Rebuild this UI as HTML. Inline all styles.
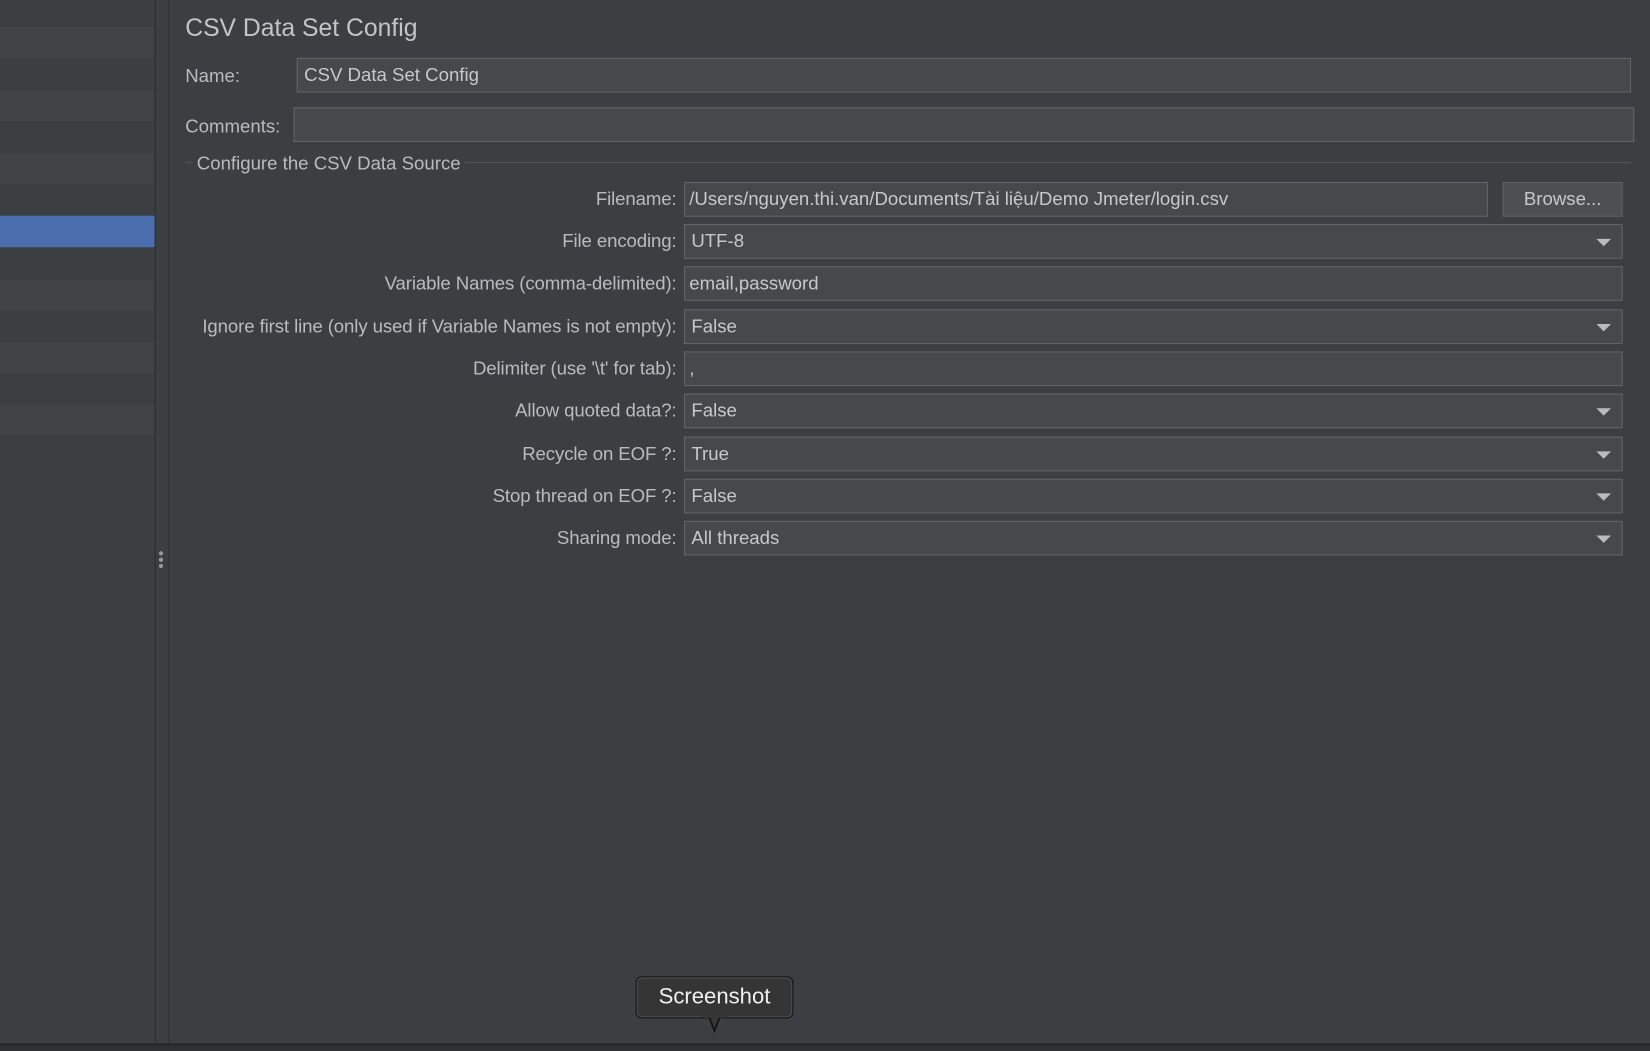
<!DOCTYPE html>
<html><head><meta charset="utf-8"><style>
html,body{margin:0;padding:0;background:#3c3f41;overflow:hidden;width:1650px;height:1050px}
#w{position:absolute;left:0;top:0;width:1568px;height:998px;transform:scale(1.05230,1.05210);transform-origin:0 0;font-family:"Liberation Sans",sans-serif;color:#bbbbbb;font-size:17.7px}
.a{position:absolute}
.f{position:absolute;background:#45494a;border:1px solid #646464;box-sizing:border-box;height:33px;line-height:31px;padding-left:6px;color:#c8c8c8;font-size:17.7px}
.l{position:absolute;right:925px;text-align:right;white-space:nowrap;line-height:33px;letter-spacing:-0.1px}
.dd::after{content:"";position:absolute;right:10px;top:13px;border-left:7px solid transparent;border-right:7px solid transparent;border-top:7px solid #bbb}
</style></head><body><div id="w">
<div class="a" style="left:0;top:0;width:147px;height:998px;background:#3c3f41"></div>
<div class="a" style="left:0;top:26px;width:147px;height:29px;background:#414446"></div>
<div class="a" style="left:0;top:86px;width:147px;height:29px;background:#414446"></div>
<div class="a" style="left:0;top:146px;width:147px;height:29px;background:#414446"></div>
<div class="a" style="left:0;top:205px;width:147px;height:30px;background:#4b6eaf"></div>
<div class="a" style="left:0;top:266px;width:147px;height:29px;background:#414446"></div>
<div class="a" style="left:0;top:325px;width:147px;height:29px;background:#414446"></div>
<div class="a" style="left:0;top:385px;width:147px;height:29px;background:#414446"></div>
<div class="a" style="left:147px;top:0;width:1px;height:998px;background:#2b2b2b"></div>
<div class="a" style="left:160px;top:0;width:1px;height:998px;background:#2e3032"></div>
<div class="a" style="left:151px;top:524px;width:4px;height:4px;border-radius:2px;background:#999;box-shadow:0 6px 0 #999,0 12px 0 #999"></div>
<div class="a" style="left:176px;top:13px;font-size:23.5px;color:#c4c4c4">CSV Data Set Config</div>
<div class="a" style="left:176px;top:60px;line-height:24px">Name:</div>
<div class="f" style="left:282px;top:55px;width:1268px">CSV Data Set Config</div>
<div class="a" style="left:176px;top:108px;line-height:24px">Comments:</div>
<div class="f" style="left:279px;top:102px;width:1274px"></div>
<div class="a" style="left:176px;top:154px;width:1374px;height:1px;background:#555"></div>
<div class="a" style="left:183px;top:144px;padding:0 4px;background:#3c3f41;line-height:22px">Configure the CSV Data Source</div>
<div class="l" style="top:173px">Filename:</div>
<div class="f" style="left:650px;top:173px;width:764px;padding-left:4px">/Users/nguyen.thi.van/Documents/Tài liệu/Demo Jmeter/login.csv</div>
<div class="f" style="left:1428px;top:173px;width:114px;text-align:center;padding:0;background:#4c5052;border-color:#5e6060">Browse...</div>
<div class="l" style="top:213px">File encoding:</div>
<div class="f dd" style="left:650px;top:213px;width:892px">UTF-8</div>
<div class="l" style="top:253px">Variable Names (comma-delimited):</div>
<div class="f" style="left:650px;top:253px;width:892px;padding-left:4px">email,password</div>
<div class="l" style="top:294px">Ignore first line (only used if Variable Names is not empty):</div>
<div class="f dd" style="left:650px;top:294px;width:892px">False</div>
<div class="l" style="top:334px">Delimiter (use '\t' for tab):</div>
<div class="f" style="left:650px;top:334px;width:892px;padding-left:4px">,</div>
<div class="l" style="top:374px">Allow quoted data?:</div>
<div class="f dd" style="left:650px;top:374px;width:892px">False</div>
<div class="l" style="top:415px">Recycle on EOF ?:</div>
<div class="f dd" style="left:650px;top:415px;width:892px">True</div>
<div class="l" style="top:455px">Stop thread on EOF ?:</div>
<div class="f dd" style="left:650px;top:455px;width:892px">False</div>
<div class="l" style="top:495px">Sharing mode:</div>
<div class="f dd" style="left:650px;top:495px;width:892px">All threads</div>
<div class="a" style="left:0;top:992px;width:1568px;height:6px;background:#2e3032;border-top:1px solid #1f1f1f"></div>
<div class="a" style="left:604px;top:928px;width:150px;height:40px;box-sizing:border-box;background:#353536;border:1.5px solid #111;border-radius:6px;box-shadow:inset 0 0 0 1px #555;color:#f0f0f0;font-size:21px;text-align:center;line-height:38px">Screenshot</div>
<svg class="a" style="left:666px;top:965px" width="26" height="18"><path d="M1 2 L8 2 L13 15 L18 2 L25 2" fill="#353536" stroke="#111" stroke-width="1.5"/><rect x="2" y="0" width="22" height="2.5" fill="#353536"/></svg>
</div></body></html>
